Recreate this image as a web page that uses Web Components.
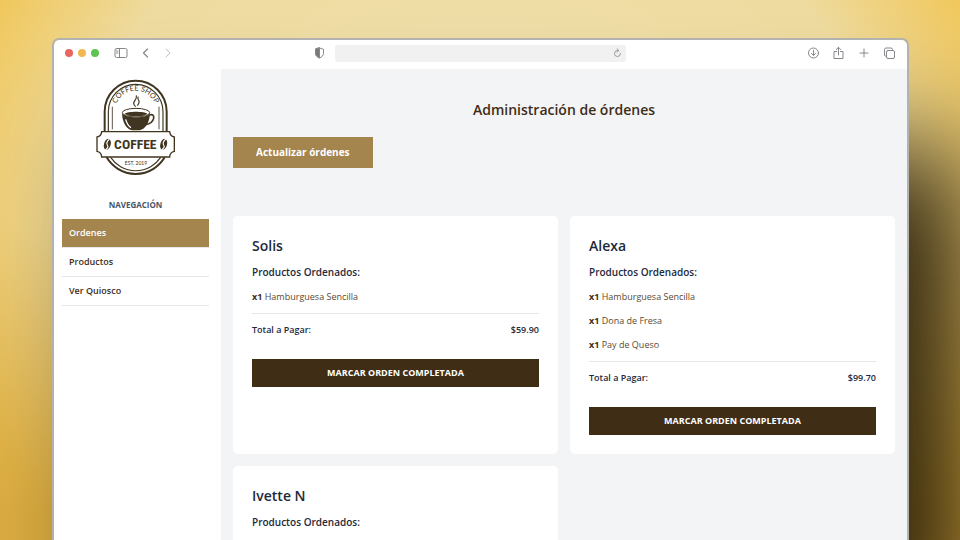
<!DOCTYPE html>
<html lang="es">
<head>
<meta charset="utf-8">
<title>Administración de órdenes</title>
<style>
  body {
    margin: 0;
    height: 100vh;
    box-sizing: border-box;
    padding: 38px 51px 0 52px;
    overflow: hidden;
    font-family: "Open Sans", "Noto Sans", sans-serif;
    font-size: 10px;
    color: #1e293b;
    background:
      linear-gradient(to bottom, rgba(200, 150, 45, 0) 42%, rgba(205, 155, 50, .6) 95%),
      radial-gradient(ellipse 57% 88% at 50% 40%, #f0e0b0 0%, #eedb9f 74%, #f0c658 100%);
  }
</style>
</head>
<body>
<browser-window>
  <browser-toolbar slot="toolbar"></browser-toolbar>
  <side-bar slot="sidebar">
    <nav-link href="#ordenes" active>Ordenes</nav-link>
    <nav-link href="#productos">Productos</nav-link>
    <nav-link href="#quiosco">Ver Quiosco</nav-link>
  </side-bar>
  <orders-view>
    <order-card name="Solis" total="$59.90">
      <order-line qty="1">Hamburguesa Sencilla</order-line>
    </order-card>
    <order-card name="Alexa" total="$99.70">
      <order-line qty="1">Hamburguesa Sencilla</order-line>
      <order-line qty="1">Dona de Fresa</order-line>
      <order-line qty="1">Pay de Queso</order-line>
    </order-card>
    <order-card name="Ivette N"></order-card>
  </orders-view>
</browser-window>

<script>
const define = (name, render) => customElements.define(name, class extends HTMLElement {
  connectedCallback() {
    if (!this.shadowRoot) this.attachShadow({ mode: 'open' }).innerHTML = render(this);
  }
});

define('browser-window', () => `
  <style>
    :host {
      display: flex; flex-direction: column; height: 100%; box-sizing: border-box;
      border: 2px solid #b2b3b0; border-bottom: 0; border-radius: 7px 7px 0 0;
      background: #fff; background-clip: padding-box;
      box-shadow: 60px 110px 110px #33270c;
    }
    .page { display: flex; flex: 1; min-height: 0; overflow: hidden; }
  </style>
  <slot name="toolbar"></slot>
  <div class="page"><slot name="sidebar"></slot><slot></slot></div>`);

define('browser-toolbar', () => `
  <style>
    :host { display: grid; grid-template-columns: 1fr 312px 1fr; align-items: center; height: 26px; padding: 0 11px 3px; }
    .group { display: flex; align-items: center; }
    .dots { display: flex; gap: 5px; margin-right: 4px; }
    i { width: 8px; height: 8px; border-radius: 50%; background: #e9655f; }
    i:nth-child(2) { background: #f0b850; }
    i:nth-child(3) { background: #5dc454; }
    button { all: unset; display: flex; cursor: pointer; }
    svg { display: block; fill: none; stroke: #85878a; stroke-width: 1; stroke-linecap: round; stroke-linejoin: round; }
    .nav { gap: 11px; }
    .right { justify-content: flex-end; gap: 12px; }
    .center { gap: 10px; margin: 0 11px 0 -11px; }
    .address { display: flex; align-items: center; flex: 1; height: 17px; padding-right: 4px; border-radius: 3px; background: #f1f1f1; }
    input { flex: 1; min-width: 0; border: 0; padding: 0 6px; background: none; outline: 0; font: inherit; }
  </style>
  <div class="group nav">
    <span class="dots"><i></i><i></i><i></i></span>
    <button aria-label="Barra lateral"><svg width="14" height="12"><rect x="1" y="1.500" width="12" height="9" rx="1.500"/><path d="M5.500 1.500v9M2.500 4h1.500M2.500 6h1.500"/></svg></button>
    <button aria-label="Atrás"><svg width="14" height="12"><path d="M8.500 2L4.500 6l4 4" stroke-width="1.200"/></svg></button>
    <button aria-label="Adelante"><svg width="10" height="12"><path d="M2 2l4 4-4 4" stroke="#bfc1c2"/></svg></button>
  </div>
  <div class="group center">
    <button aria-label="Privacidad"><svg width="11" height="12"><path d="M5.500 1L9.500 2.300v4c0 2.300-2 3.900-4 4.700-2-.8-4-2.400-4-4.700v-4z"/><path d="M5.500 1v10c-2-.8-4-2.400-4-4.700v-4z" fill="#77797b"/></svg></button>
    <div class="address">
      <input type="text" aria-label="Dirección">
      <button aria-label="Recargar"><svg width="9" height="10"><path d="M7.500 5.500A3 3 0 1 1 4.500 2.500H5.500M4 .8l1.800 1.700L4 4.200" stroke-width=".8"/></svg></button>
    </div>
  </div>
  <div class="group right">
    <button aria-label="Descargas"><svg width="13" height="14"><circle cx="6.500" cy="7" r="5"/><path d="M6.500 4.300v5M4.500 7.500l2 2 2-2"/></svg></button>
    <button aria-label="Compartir"><svg width="13" height="14"><path d="M4.500 5.500H2v7h9v-7H8.500M6.500 9V1.500M4.300 3.500l2.200-2.200 2.200 2.200"/></svg></button>
    <button aria-label="Nueva pestaña"><svg width="14" height="14"><path d="M7 3v8M3 7h8"/></svg></button>
    <button aria-label="Pestañas"><svg width="13" height="14"><rect x="3.500" y="4.500" width="8" height="8" rx="1.500"/><path d="M3.500 10H2.500Q1.500 10 1.500 9V3.500Q1.500 2 3 2H8Q9.500 2 9.500 3.500v1"/></svg></button>
  </div>`);

define('coffee-logo', () => `
  <style>
    :host { display: block; }
    svg { display: block; }
  </style>
  <svg width="81" height="97" viewBox="30 27 243 291" fill="none" stroke="#403520" role="img" aria-label="Coffee Shop">
    <path d="M59 186V125a93 93 0 0 1 186 0V186M65 262a101 101 0 0 0 174 0" stroke-width="6"/>
    <path d="M70 186V125a82 82 0 0 1 164 0V186M77 262a90 90 0 0 0 150 0" stroke-width="3.500"/>
    <path d="M82 178V110M222 178V110" stroke-width="2.500"/>
    <path d="M50 185H254Q255 199 268 201V244Q255 246 254 261H50Q49 246 36 244V201Q49 199 50 185Z" fill="#fff" stroke-width="4"/>
    <path id="arc" d="M90 124A62 62 0 0 1 214 124" stroke="none"/>
    <g fill="#403520" stroke="none" font-family="Lato, sans-serif">
      <text font-size="22" font-weight="400" text-anchor="middle"><textPath href="#arc" startOffset="50%">COFFEE SHOP</textPath></text>
      <text x="153" y="284" font-size="15" font-weight="400" text-anchor="middle">EST. 2019</text>
      <text x="151" y="238" font-size="41" font-weight="700" text-anchor="middle" font-family="'Liberation Sans Narrow', 'Roboto Condensed', Roboto, sans-serif">COFFEE</text>
      <ellipse cx="67" cy="223" rx="10" ry="17" transform="rotate(16 67 223)"/>
      <ellipse cx="236" cy="223" rx="10" ry="17" transform="rotate(16 236 223)"/>
      <path d="M111 129C112 158 125 178 141 181H164C181 177 194 158 195 129C190 146 118 146 111 129Z"/>
    </g>
    <path d="M73 207Q62 218 67 225T61 240M242 207Q231 218 236 225T230 240" stroke="#fff" stroke-width="3.500"/>
    <ellipse cx="153" cy="128" rx="41" ry="13" stroke-width="3"/>
    <path d="M119 131C127 123 179 123 187 131C179 141 127 141 119 131Z" fill="#403520" stroke="none"/>
    <path d="M193 135Q208 131 206 145Q202 161 182 164" stroke-width="5"/>
    <path d="M122 148Q127 166 138 173" stroke="#fff" stroke-width="4"/>
    <path d="M152 110Q142 101 149 93T154 76M157 107Q166 96 160 89Q157 85 160 80" stroke-width="3.500"/>
  </svg>`);

define('side-bar', () => `
  <style>
    :host { display: flex; flex-direction: column; flex: 0 0 167px; box-sizing: border-box; padding: 10px 12px 0 8px; }
    coffee-logo { align-self: center; }
    h2 { margin: 22px 0 7px; font-size: 8px; line-height: 14px; font-weight: 700; text-align: center; color: #475569; }
  </style>
  <coffee-logo></coffee-logo>
  <h2>NAVEGACIÓN</h2>
  <nav aria-label="Navegación"><slot></slot></nav>`);

define('nav-link', el => `
  <style>
    :host { display: block; border-bottom: 1px solid #e5e7eb; }
    a { display: block; padding: 7px; font-size: 9px; line-height: 14px; font-weight: 600; color: #3f2d16; text-decoration: none; }
    :host([active]) a { background: #a5854e; color: #fff; }
  </style>
  <a href="${el.getAttribute('href')}"><slot></slot></a>`);

define('orders-view', () => `
  <style>
    :host { display: block; flex: 1; min-width: 0; padding: 0 12px; background: #f3f4f6; }
    h1 { margin: 32px 0 18px; font-size: 14px; line-height: 18px; font-weight: 600; text-align: center; color: #3f2d16; }
    button { display: block; border: 0; padding: 7px 23px; background: #a5854e; color: #fff; font: 700 10px/17px "Open Sans", "Noto Sans", sans-serif; cursor: pointer; }
    .grid { display: grid; grid-template-columns: 1fr 1fr; grid-auto-rows: 1fr; gap: 12px; margin-top: 48px; }
  </style>
  <h1>Administración de órdenes</h1>
  <button type="button">Actualizar órdenes</button>
  <div class="grid"><slot></slot></div>`);

define('order-card', el => `
  <style>
    :host { display: block; padding: 19px; border-radius: 5px; background: #fff; }
    h2 { margin: 0 0 7px; font-size: 14px; line-height: 21px; font-weight: 600; color: #1e293b; }
    h3 { margin: 0 0 4px; font-size: 10px; line-height: 18px; font-weight: 600; color: #1e293b; }
    .total { display: flex; justify-content: space-between; margin: 4px 0 21px; padding-top: 8px; border-top: 1px solid #e5e7eb; font-size: 9px; line-height: 16px; font-weight: 600; }
    button { display: block; width: 100%; border: 0; padding: 6px; background: #3f2d16; color: #fff; font: 700 9px/16px "Open Sans", "Noto Sans", sans-serif; cursor: pointer; }
  </style>
  <h2>${el.getAttribute('name')}</h2>
  <h3>Productos Ordenados:</h3>
  <slot></slot>
  ${el.hasAttribute('total') ? `
  <div class="total"><span>Total a Pagar:</span><span>${el.getAttribute('total')}</span></div>
  <button type="button">MARCAR ORDEN COMPLETADA</button>` : ''}`);

define('order-line', el => `
  <style>
    :host { display: block; font-size: 9px; line-height: 24px; color: #5b4a32; }
    b { font-weight: 700; color: #3f2d16; }
  </style>
  <b>x${el.getAttribute('qty')}</b> <slot></slot>`);
</script>
</body>
</html>
